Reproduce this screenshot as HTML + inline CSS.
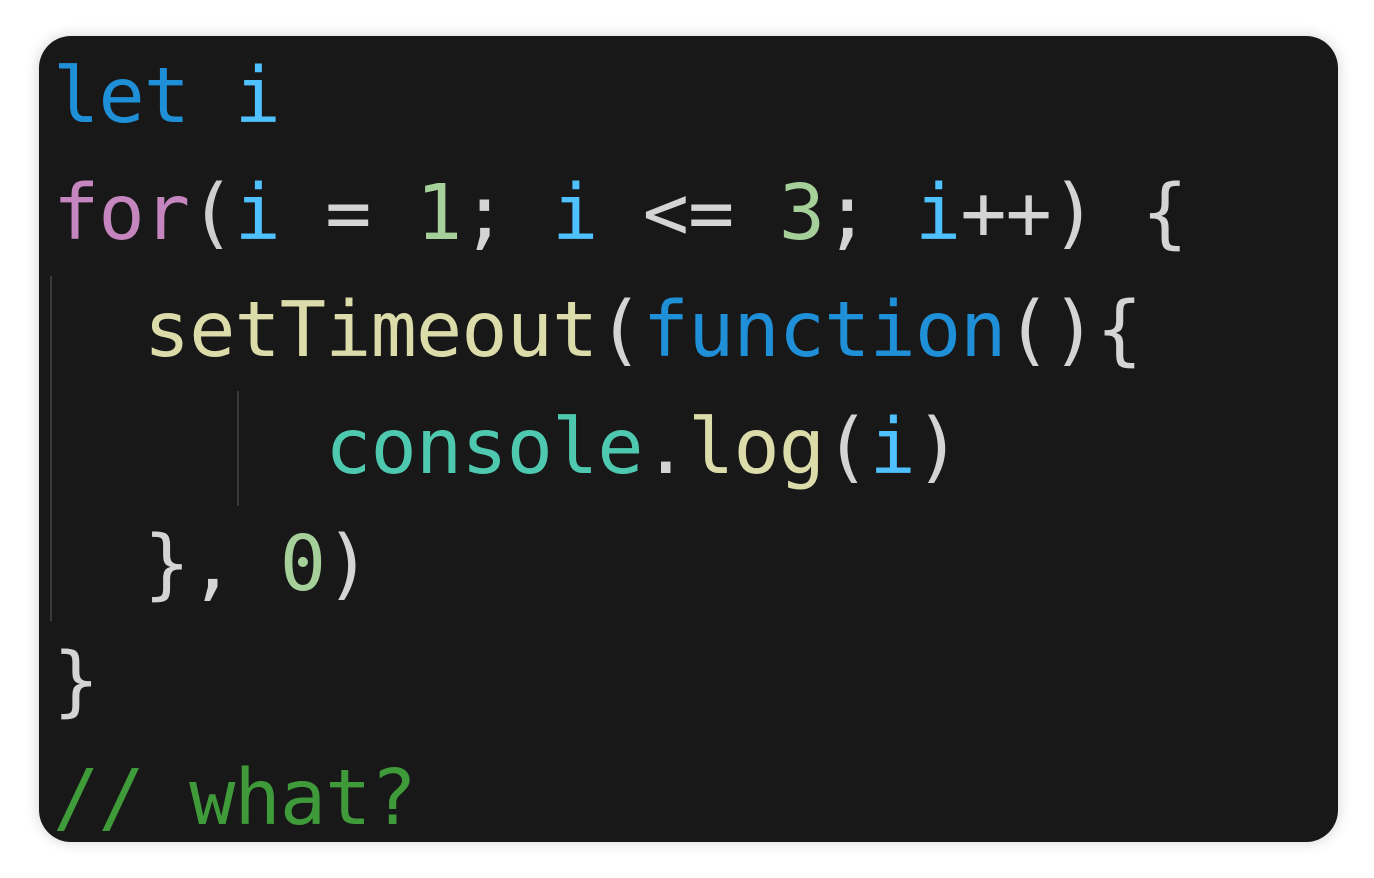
<!DOCTYPE html>
<html><head><style>
html,body{margin:0;padding:0;background:#fff;width:1374px;height:878px;overflow:hidden}
.card{position:absolute;left:39px;top:36px;width:1299px;height:806px;background:#181818;border-radius:32px;box-shadow:0 0 14px rgba(0,0,0,0.18);overflow:hidden}
pre{position:absolute;left:14px;top:2px;margin:0;font-family:"DejaVu Sans Mono","Liberation Mono",monospace;font-size:77px;letter-spacing:-1px;line-height:117px;color:#d4d4d4}
.k{color:#1f8fd8}.v{color:#4fc1ff}.c{color:#c586c0}.n{color:#a5d09a}.f{color:#dcdcaa}.t{color:#4ec9b0}.m{color:#3f9b3a}.p{color:#cfcfcf}
.g{position:absolute;width:2px;background:#3a3a3a}
</style></head><body>
<div class="card">
<div class="g" style="left:11px;top:240px;height:345px"></div>
<div class="g" style="left:198px;top:355px;height:115px"></div>
<pre><span class="k">let</span> <span class="v">i</span>
<span class="c">for</span><span class="p">(</span><span class="v">i</span> = <span class="n">1</span>; <span class="v">i</span> &lt;= <span class="n">3</span>; <span class="v">i</span>++) {
  <span class="f">setTimeout</span>(<span class="k">function</span>(){
      <span class="t">console</span>.<span class="f">log</span>(<span class="v">i</span>)
  }, <span class="n">0</span>)
}
<span class="m">// what?</span></pre>
</div>
</body></html>
